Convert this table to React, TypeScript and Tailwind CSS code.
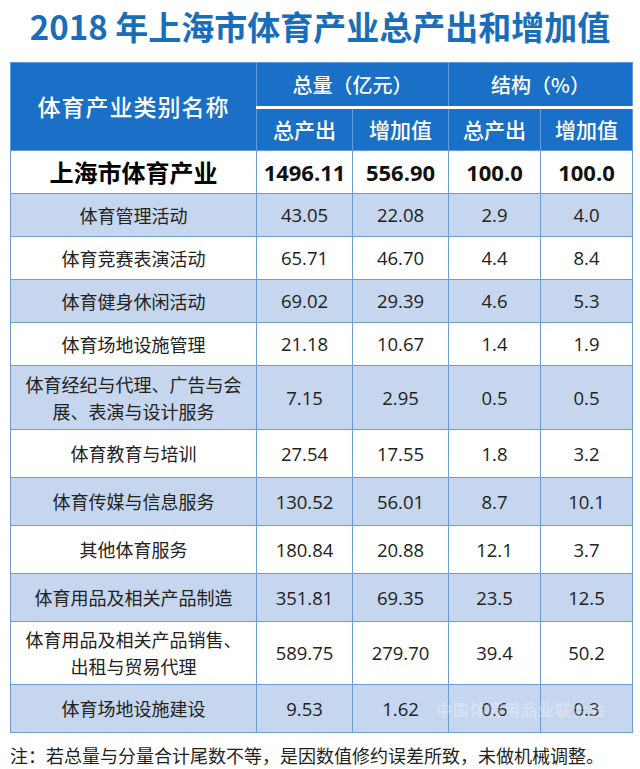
import React from 'react';

type Row = { name: string[]; v: [string, string, string, string]; h: string; blue: boolean };

const ROWS: Row[] = [
  { name: ['体育管理活动'], v: ['43.05', '22.08', '2.9', '4.0'], h: 'h-[43px]', blue: true },
  { name: ['体育竞赛表演活动'], v: ['65.71', '46.70', '4.4', '8.4'], h: 'h-[43px]', blue: false },
  { name: ['体育健身休闲活动'], v: ['69.02', '29.39', '4.6', '5.3'], h: 'h-[43px]', blue: true },
  { name: ['体育场地设施管理'], v: ['21.18', '10.67', '1.4', '1.9'], h: 'h-[43px]', blue: false },
  { name: ['体育经纪与代理、广告与会', '展、表演与设计服务'], v: ['7.15', '2.95', '0.5', '0.5'], h: 'h-[64px]', blue: true },
  { name: ['体育教育与培训'], v: ['27.54', '17.55', '1.8', '3.2'], h: 'h-[48px]', blue: false },
  { name: ['体育传媒与信息服务'], v: ['130.52', '56.01', '8.7', '10.1'], h: 'h-[48px]', blue: true },
  { name: ['其他体育服务'], v: ['180.84', '20.88', '12.1', '3.7'], h: 'h-[48px]', blue: false },
  { name: ['体育用品及相关产品制造'], v: ['351.81', '69.35', '23.5', '12.5'], h: 'h-[48px]', blue: true },
  { name: ['体育用品及相关产品销售、', '出租与贸易代理'], v: ['589.75', '279.70', '39.4', '50.2'], h: 'h-[63px]', blue: false },
  { name: ['体育场地设施建设'], v: ['9.53', '1.62', '0.6', '0.3'], h: 'h-[48px]', blue: true },
];

const cjk = "font-['Noto_Sans_CJK_SC',sans-serif]";
const num = "font-['Open_Sans','Noto_Sans_CJK_SC',sans-serif]";
const bodyCell = 'border border-[#6f9bd3] text-center align-middle p-0';
const headCell = 'border border-[#5f9be0] text-center align-middle p-0 text-white';

export default function App() {
  return (
    <div className={`w-[640px] h-[769px] bg-white relative overflow-hidden ${cjk}`}>
      <h1 className="h-[62px] flex items-center justify-center text-[33px] font-bold text-[#1a6db8] pb-[8px] whitespace-nowrap">
        2018 年上海市体育产业总产出和增加值
      </h1>

      <table className="ml-[10px] border-collapse table-fixed w-[622px]">
        <colgroup>
          <col className="w-[246px]" />
          <col className="w-[96px]" />
          <col className="w-[96px]" />
          <col className="w-[92px]" />
          <col className="w-[92px]" />
        </colgroup>
        <thead className="bg-[#1a70c6]">
          <tr className="h-[45px]">
            <th rowSpan={2} className={`${headCell} text-[23px] font-medium tracking-[1px]`}>体育产业类别名称</th>
            <th colSpan={2} className={`${headCell} border-b-[3px] border-b-white text-[20px] font-medium`}>总量（亿元）</th>
            <th colSpan={2} className={`${headCell} border-b-[3px] border-b-white text-[20px] font-medium`}>结构（%）</th>
          </tr>
          <tr className="h-[43px]">
            <th className={`${headCell} text-[21px] font-medium`}>总产出</th>
            <th className={`${headCell} text-[21px] font-medium`}>增加值</th>
            <th className={`${headCell} text-[21px] font-medium`}>总产出</th>
            <th className={`${headCell} text-[21px] font-medium`}>增加值</th>
          </tr>
        </thead>
        <tbody>
          <tr className="h-[43px] bg-white">
            <td className={`${bodyCell} text-[24px] font-bold text-black`}>上海市体育产业</td>
            <td className={`${bodyCell} ${num} text-[22px] font-bold text-[#111]`}>1496.11</td>
            <td className={`${bodyCell} ${num} text-[22px] font-bold text-[#111]`}>556.90</td>
            <td className={`${bodyCell} ${num} text-[22px] font-bold text-[#111]`}>100.0</td>
            <td className={`${bodyCell} ${num} text-[22px] font-bold text-[#111]`}>100.0</td>
          </tr>
          {ROWS.map((r) => (
            <tr key={r.name.join('')} className={`${r.h} ${r.blue ? 'bg-[#c5d6ee]' : 'bg-white'}`}>
              <td className={`${bodyCell} text-[18px] leading-[27px] text-[#222]`}>
                {r.name.map((l) => (
                  <div key={l}>{l}</div>
                ))}
              </td>
              {r.v.map((x, i) => (
                <td key={i} className={`${bodyCell} ${num} text-[18.5px] text-[#222]`}>{x}</td>
              ))}
            </tr>
          ))}
        </tbody>
      </table>

      <div className="absolute left-[436px] top-[697px] text-[16px] font-bold tracking-[1px] text-white/30 pointer-events-none">
        中国体育用品业联合会
      </div>

      <p className="mt-[11px] ml-[10px] text-[18px] leading-[22px] text-[#1f1f1f] whitespace-nowrap">
        注：若总量与分量合计尾数不等，是因数值修约误差所致，未做机械调整。
      </p>
    </div>
  );
}
